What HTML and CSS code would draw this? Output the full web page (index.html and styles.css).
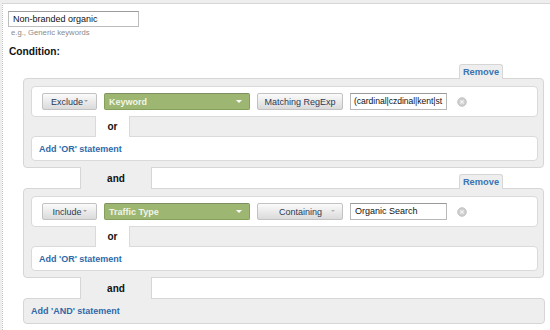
FILE: index.html
```html
<!DOCTYPE html>
<html>
<head>
<meta charset="utf-8">
<link rel="stylesheet" href="styles.css">
</head>
<body>
<div class="panel">
  <div class="name-field">Non-branded organic</div>
  <div class="hint">e.g., Generic keywords</div>
  <div class="cond-label">Condition:</div>
  <div class="conditions">
    <div class="group">
      <a class="remove-tab">Remove</a>
      <div class="rule">
        <span class="btn btn-mode">Exclude<i class="caret"></i></span>
        <span class="dim-select">Keyword<i class="caret caret-white"></i></span>
        <span class="btn btn-match">Matching RegExp</span>
        <span class="value-field value-tight">(cardinal|czdinal|kent|st</span>
        <span class="clear-icon"><svg width="10" height="10" viewBox="0 0 10 10"><circle cx="5" cy="5" r="4.3" fill="#cfcfcf" stroke="#b9b9b9" stroke-width="0.8"/><path d="M3.3 3.3 L6.7 6.7 M6.7 3.3 L3.3 6.7" stroke="#f4f4f4" stroke-width="1.2"/></svg></span>
      </div>
      <div class="connector connector-or"><span class="conn-gap"></span><span class="conn-mid">or</span></div>
      <div class="add-box"><a class="link">Add 'OR' statement</a></div>
    </div>
    <div class="connector connector-and"><span class="conn-gap"></span><span class="conn-mid">and</span></div>
    <div class="group">
      <a class="remove-tab">Remove</a>
      <div class="rule">
        <span class="btn btn-mode">Include<i class="caret"></i></span>
        <span class="dim-select">Traffic Type<i class="caret caret-white"></i></span>
        <span class="btn btn-match btn-contain">Containing<i class="caret caret-contain"></i></span>
        <span class="value-field">Organic Search</span>
        <span class="clear-icon"><svg width="10" height="10" viewBox="0 0 10 10"><circle cx="5" cy="5" r="4.3" fill="#cfcfcf" stroke="#b9b9b9" stroke-width="0.8"/><path d="M3.3 3.3 L6.7 6.7 M6.7 3.3 L3.3 6.7" stroke="#f4f4f4" stroke-width="1.2"/></svg></span>
      </div>
      <div class="connector connector-or"><span class="conn-gap"></span><span class="conn-mid">or</span></div>
      <div class="add-box"><a class="link">Add 'OR' statement</a></div>
    </div>
    <div class="connector connector-and"><span class="conn-gap"></span><span class="conn-mid">and</span></div>
    <div class="add-and"><a class="link">Add 'AND' statement</a></div>
  </div>
</div>
</body>
</html>
```
FILE: styles.css
```css
* { box-sizing: border-box; }
html, body { margin: 0; height: 100%; }
body {
  background: #eeeeee;
  font-family: "Liberation Sans", Arial, sans-serif;
  overflow: hidden;
}
.panel {
  margin: 3px 0 0 2px;
  height: calc(100% - 3px);
  background: #fff;
  border-top: 1px solid #d6d6d6;
  border-left: 1px dotted #c4c4c4;
  padding: 7px 0 0 5px;
}
.name-field {
  width: 131px;
  height: 16px;
  border: 1px solid #bdbdbd;
  border-top-color: #9c9c9c;
  font-size: 9px;
  line-height: 14px;
  padding-left: 4px;
  color: #111;
  white-space: nowrap;
}
.hint {
  font-size: 7.7px;
  line-height: 9px;
  color: #8a8a8a;
  margin: 1px 0 0 3px;
}
.cond-label {
  font-size: 10.2px;
  font-weight: bold;
  line-height: 12px;
  margin: 9px 0 0 1px;
  color: #111;
}
.conditions {
  margin: 20px 6px 0 15px;
}
.group {
  position: relative;
  background: #eeeeee;
  border: 1px solid #d6d6d6;
  border-radius: 4px;
  padding: 7px 5px 6px 7px;
}
.remove-tab {
  position: absolute;
  top: -15px;
  right: 40px;
  width: 44px;
  height: 15px;
  background: #eeeeee;
  border: 1px solid #d6d6d6;
  border-bottom: none;
  border-radius: 3px 3px 0 0;
  font-size: 9.3px;
  font-weight: bold;
  color: #3b74b2;
  text-align: center;
  line-height: 14px;
}
.rule {
  display: flex;
  align-items: center;
  gap: 7px;
  height: 31px;
  background: #fff;
  border: 1px solid #dadada;
  border-radius: 4px;
  padding-left: 10px;
}
.btn {
  height: 17px;
  display: flex;
  align-items: center;
  justify-content: center;
  border: 1px solid #c2c2c2;
  border-radius: 2px;
  background: linear-gradient(#fbfbfb, #dadada);
  font-size: 9px;
  color: #2b3a55;
  white-space: nowrap;
}
.btn-mode { width: 55px; }
.btn-match { width: 86px; }
.btn-contain { justify-content: flex-start; padding-left: 21px; }
.caret {
  display: inline-block;
  width: 0;
  height: 0;
  border-left: 2px solid transparent;
  border-right: 2px solid transparent;
  border-top: 2px solid #a0a0a0;
  margin-left: 1px;
  margin-top: -1px;
}
.caret-contain { margin-left: 9px; border-top-color: #b4b4b4; }
.dim-select {
  width: 146px;
  height: 17px;
  display: flex;
  align-items: center;
  justify-content: space-between;
  background: #9db672;
  border: 1px solid #84a05a;
  border-top-color: #7f8f5f;
  border-radius: 2px;
  padding: 0 7px 0 4px;
  font-size: 9px;
  font-weight: bold;
  color: #f1f5e8;
  white-space: nowrap;
}
.caret-white {
  border-left: 3px solid transparent;
  border-right: 3px solid transparent;
  border-top: 3px solid #ffffff;
  margin-top: 0;
}
.value-field {
  width: 97px;
  height: 17px;
  border: 1px solid #b8b8b8;
  border-top-color: #9a9a9a;
  background: #fff;
  font-size: 9px;
  line-height: 15px;
  padding-left: 4px;
  white-space: nowrap;
  overflow: hidden;
  color: #111;
}
.value-tight {
  font-size: 8.6px;
  padding-left: 3px;
  letter-spacing: -0.05px;
}
.clear-icon {
  display: flex;
  margin-left: 3px;
}
.connector {
  display: flex;
  margin: -1px 0;
}
.conn-mid {
  position: relative;
  z-index: 1;
  display: flex;
  align-items: center;
  justify-content: center;
  font-size: 10px;
  font-weight: bold;
  color: #111;
  border-left: 1px solid #dadada;
  border-right: 1px solid #dadada;
}
.connector-or { height: 21px; }
.connector-or .conn-gap { width: 64px; }
.connector-or .conn-mid { width: 35px; background: #fff; }
.connector-and { height: 22px; }
.connector-and .conn-gap { width: 57px; }
.connector-and .conn-mid { width: 72px; background: #eeeeee; border-color: #d6d6d6; }
.add-box {
  height: 25px;
  display: flex;
  align-items: center;
  background: #fff;
  border: 1px solid #dadada;
  border-radius: 4px;
  padding-left: 7px;
}
.add-and {
  height: 26px;
  display: flex;
  align-items: center;
  background: #eeeeee;
  border: 1px solid #d6d6d6;
  border-radius: 4px;
  padding-left: 7px;
  margin-right: -1px;
}
.link {
  font-size: 9px;
  font-weight: bold;
  color: #3069a9;
  white-space: nowrap;
}
```
